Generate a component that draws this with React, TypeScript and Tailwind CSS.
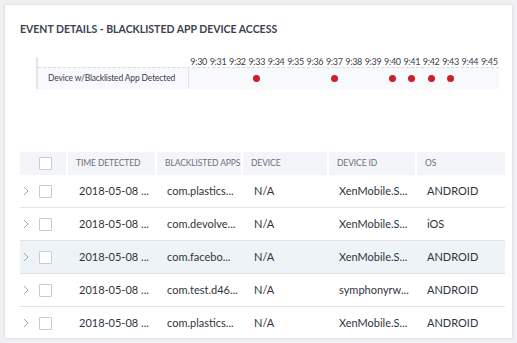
const minutes = ["9:30", "9:31", "9:32", "9:33", "9:34", "9:35", "9:36", "9:37", "9:38", "9:39", "9:40", "9:41", "9:42", "9:43", "9:44", "9:45"];
const hits = ["9:33", "9:37", "9:40", "9:41", "9:42", "9:43"];

const rows = [
  { time: "2018-05-08 ...", app: "com.plastics...", device: "N/A", id: "XenMobile.S...", os: "ANDROID" },
  { time: "2018-05-08 ...", app: "com.devolve...", device: "N/A", id: "XenMobile.S...", os: "iOS" },
  { time: "2018-05-08 ...", app: "com.facebo...", device: "N/A", id: "XenMobile.S...", os: "ANDROID", active: true },
  { time: "2018-05-08 ...", app: "com.test.d46...", device: "N/A", id: "symphonyrw...", os: "ANDROID" },
  { time: "2018-05-08 ...", app: "com.plastics...", device: "N/A", id: "XenMobile.S...", os: "ANDROID" },
];

const headers = ["TIME DETECTED", "BLACKLISTED APPS", "DEVICE", "DEVICE ID", "OS"];

const Checkbox = () => <span className="block w-[13px] h-[13px] border border-[#c9cbd0] bg-white rounded-[1px]" />;

const Chevron = () => (
  <svg width="6" height="10" viewBox="0 0 6 10" className="text-[#a3a7ae]">
    <path d="M1 1l4 4-4 4" fill="none" stroke="currentColor" strokeWidth="1" />
  </svg>
);

const cols = "grid grid-cols-[46px_87px_84px_84px_86px_88px] gap-x-[2px]";

export default function App() {
  return (
    <div className="w-[517px] h-[343px] bg-[#f1f1f3] p-[5px] font-['Lato',sans-serif]">
      <div className="h-[333px] w-[507px] bg-white shadow-[0_0_3px_rgba(0,0,0,0.14)] overflow-hidden">
        <h1 className="pl-[15px] pt-[18px] text-[10.5px] font-bold text-[#3c4250] leading-[12px]">
          EVENT DETAILS - BLACKLISTED APP DEVICE ACCESS
        </h1>

        <div className="mt-[22px] ml-[31px] w-[463px] border-l-2 border-[#e4e6ea]">
          <div className="flex h-[10px]">
            <div className="w-[151px]" />
            <div className="grid grid-cols-16 w-[310px] text-[9px] leading-[10px] tracking-[-0.3px] text-[#3c4048]">
              {minutes.map((m) => (
                <span key={m} className="text-center whitespace-nowrap">{m}</span>
              ))}
            </div>
          </div>
          <div className="flex h-[22px] border-t border-dashed border-[#d9dbe0] bg-[#f8f9fc]">
            <div className="w-[151px] border-r border-[#e4e6ea] flex items-center pl-[10px] text-[8.5px] tracking-[-0.15px] text-[#3c4048] whitespace-nowrap">
              Device w/Blacklisted App Detected
            </div>
            <div className="grid grid-cols-16 w-[310px] items-center">
              {minutes.map((m) => (
                <span key={m} className="flex justify-center">
                  {hits.includes(m) && <span className="w-[7px] h-[7px] rounded-full bg-[#cc1f2c]" />}
                </span>
              ))}
            </div>
          </div>
        </div>

        <div className="mt-[63px] ml-[15px] w-[485px]">
          <div className={`${cols} h-[23px]`}>
            <div className="bg-[#f4f5f8] flex items-center pl-[19px]">
              <Checkbox />
            </div>
            {headers.map((h) => (
              <div key={h} className="bg-[#f4f5f8] flex items-center pl-[8px] text-[8.5px] tracking-[-0.1px] text-[#6b707b] whitespace-nowrap overflow-hidden">
                {h}
              </div>
            ))}
          </div>
          {rows.map((r, i) => (
            <div
              key={i}
              className={`${cols} h-[33px] border-b border-[#e2e3e7] text-[11px] text-[#30353e] ${r.active ? "bg-[#eef3f8]" : ""}`}
            >
              <div className="flex items-center pl-[3px] gap-[10px]">
                <Chevron />
                <Checkbox />
              </div>
              <div className="flex items-center pl-[11px]">{r.time}</div>
              <div className="flex items-center pl-[10px]">{r.app}</div>
              <div className="flex items-center pl-[11px]">{r.device}</div>
              <div className="flex items-center pl-[10px]">{r.id}</div>
              <div className="flex items-center pl-[10px]">{r.os}</div>
            </div>
          ))}
        </div>
      </div>
    </div>
  );
}
